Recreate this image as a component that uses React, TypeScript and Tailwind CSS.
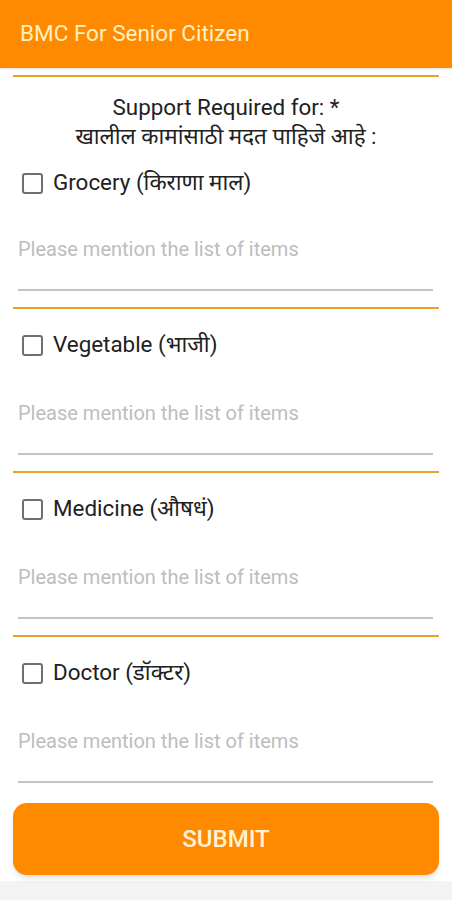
const items = [
  "Grocery (किराणा माल)",
  "Vegetable (भाजी)",
  "Medicine (औषधं)",
  "Doctor (डॉक्टर)",
];

function Box() {
  return <div className="w-[21px] h-[21px] shrink-0 rounded-[3px] border-2 border-[#6f6f6f] bg-white"></div>;
}

function Section({ label, first }: { label: string; first?: boolean }) {
  return (
    <div>
      <div className="h-[2px] bg-[#eba126]"></div>
      {first && (
        <div className="mt-[16px] text-center text-[22.4px] leading-[29px] text-[#212121]">
          <div>Support Required for: *</div>
          <div>खालील कामांसाठी मदत पाहिजे आहे :</div>
        </div>
      )}
      <div className={`${first ? "mt-[17px]" : "mt-[21px]"} flex h-[30px] items-center gap-[10px] pl-[9px]`}>
        <Box />
        <span className="text-[22.4px] text-[#212121]">{label}</span>
      </div>
      <div className={`${first ? "mt-[39px]" : "mt-[41px]"} mx-[5px] mr-[6px]`}>
        <div className="h-[24px] text-[20px] leading-[24px] text-[#bdbdbd]">Please mention the list of items</div>
        <div className="mt-[28px] h-[2px] bg-[#c4c4c4]"></div>
      </div>
      <div className="h-[16px]"></div>
    </div>
  );
}

export default function App() {
  return (
    <div className="min-h-screen bg-[#f3f3f3]" style={{ fontFamily: "Roboto, 'Noto Sans', sans-serif" }}>
      <div className="bg-white pb-[6px]">
        <div className="flex h-[68px] items-center bg-[#ff8a00] px-[20px] shadow-sm">
          <span className="text-[22.5px] text-[#fff0c4]">BMC For Senior Citizen</span>
        </div>
        <div className="px-[13px] pt-[7px]">
          {items.map((label, i) => (
            <Section key={label} label={label} first={i === 0} />
          ))}
          <button className="mt-[4px] flex h-[72px] w-full items-center justify-center rounded-[14px] bg-[#ff8a00] text-[24px] font-medium text-[#fff3d4] shadow-md">
            SUBMIT
          </button>
        </div>
      </div>
    </div>
  );
}
